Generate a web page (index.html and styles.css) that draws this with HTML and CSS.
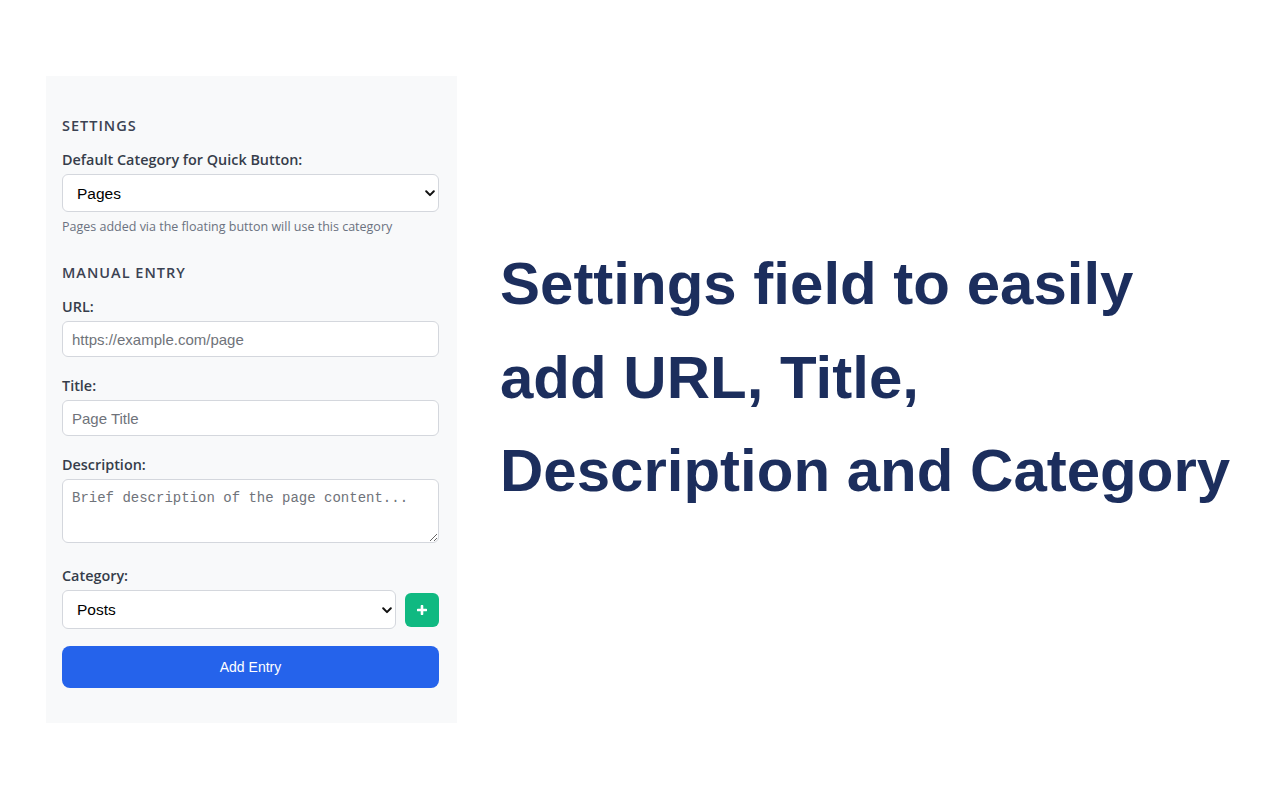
FILE: index.html
```html
<!DOCTYPE html>
<html lang="en">
<head>
<meta charset="utf-8">
<title>Settings</title>
<link rel="stylesheet" href="styles.css">
</head>
<body>
<main class="page">
  <section class="panel">
    <h2 class="section-title">Settings</h2>
    <label class="field-label" for="default-cat">Default Category for Quick Button:</label>
    <div class="select-wrap">
      <select id="default-cat" class="control select">
        <option>Pages</option>
        <option>Posts</option>
      </select>
      <svg class="chevron" width="10" height="7" viewBox="0 0 10 7" aria-hidden="true"><path d="M1.2 1.3 L5 5.1 L8.8 1.3" fill="none" stroke="#111" stroke-width="2" stroke-linecap="round" stroke-linejoin="round"/></svg>
    </div>
    <p class="help">Pages added via the floating button will use this category</p>

    <h2 class="section-title section-gap">Manual Entry</h2>
    <div class="group">
      <label class="field-label" for="url">URL:</label>
      <input id="url" class="control input" type="text" placeholder="https://example.com/page">
    </div>
    <div class="group">
      <label class="field-label" for="title">Title:</label>
      <input id="title" class="control input" type="text" placeholder="Page Title">
    </div>
    <div class="group group-desc">
      <label class="field-label" for="desc">Description:</label>
      <textarea id="desc" class="control textarea" placeholder="Brief description of the page content..."></textarea>
    </div>
    <div class="group group-cat">
      <label class="field-label" for="cat">Category:</label>
      <div class="cat-row">
        <div class="select-wrap grow">
          <select id="cat" class="control select tall">
            <option>Posts</option>
            <option>Pages</option>
          </select>
          <svg class="chevron" width="10" height="7" viewBox="0 0 10 7" aria-hidden="true"><path d="M1.2 1.3 L5 5.1 L8.8 1.3" fill="none" stroke="#111" stroke-width="2" stroke-linecap="round" stroke-linejoin="round"/></svg>
        </div>
        <button class="add-cat" type="button" aria-label="Add category">
          <svg width="10" height="10" viewBox="0 0 10 10" aria-hidden="true"><path d="M5 1 V9 M1 5 H9" stroke="#fff" stroke-width="2.6" stroke-linecap="round"/></svg>
        </button>
      </div>
    </div>
    <button class="primary" type="button">Add Entry</button>
  </section>

  <h1 class="headline">Settings field to easily add URL, Title, Description and Category</h1>
</main>
</body>
</html>
```

FILE: styles.css
```css
* { box-sizing: border-box; }

html, body {
  margin: 0;
  padding: 0;
  background: #ffffff;
}

body {
  width: 1280px;
  height: 800px;
  overflow: hidden;
  font-family: "Open Sans", "Noto Sans", sans-serif;
}

.page {
  display: flex;
  align-items: flex-start;
  padding: 76px 0 0 46px;
}

.panel {
  width: 411px;
  height: 647px;
  background: #f8f9fa;
  padding: 40px 18px 16px 16px;
  display: flex;
  flex-direction: column;
}

.section-title {
  margin: 0 0 14px 0;
  font-size: 14.5px;
  line-height: 20px;
  font-weight: 600;
  letter-spacing: 1px;
  text-transform: uppercase;
  color: #3b4252;
}

.section-gap {
  margin-top: 28px;
}

.field-label {
  display: block;
  font-size: 14.4px;
  line-height: 20px;
  font-weight: 600;
  color: #363d4a;
  margin-bottom: 4px;
}

.group {
  margin-bottom: 19px;
}

.group-desc {
  margin-bottom: 23px;
}

.group-cat {
  margin-bottom: 17px;
}

.control {
  display: block;
  width: 100%;
  margin: 0;
  border: 1px solid #d4d7dd;
  border-radius: 6px;
  background: #ffffff;
  font-family: "Liberation Sans", Arial, sans-serif;
  font-size: 15px;
  color: #111111;
  outline: none;
}

.input {
  height: 36px;
  padding: 0 9px;
}

.input::placeholder {
  color: #6f737a;
}

.textarea {
  height: 64px;
  padding: 8px 9px;
  resize: vertical;
  font-family: "Liberation Mono", "DejaVu Sans Mono", monospace;
  font-size: 14px;
  line-height: 20px;
}

.textarea::placeholder {
  color: #6f737a;
}

.select-wrap {
  position: relative;
}

.grow {
  flex: 1;
}

.select {
  -webkit-appearance: none;
  appearance: none;
  height: 38px;
  padding: 0 30px 0 14px;
  font-size: 15.5px;
  color: #000000;
}

.select.tall {
  height: 39px;
}

.chevron {
  position: absolute;
  right: 4px;
  top: 50%;
  margin-top: -3px;
  pointer-events: none;
}

.help {
  margin: 7px 0 0 0;
  font-size: 12.5px;
  line-height: 16px;
  color: #6b7280;
}

.cat-row {
  display: flex;
  align-items: center;
  gap: 9px;
}

.add-cat {
  width: 34px;
  height: 34px;
  flex: none;
  border: none;
  border-radius: 6px;
  background: #10b981;
  display: flex;
  align-items: center;
  justify-content: center;
  padding: 0;
}

.primary {
  width: 100%;
  height: 42px;
  border: none;
  border-radius: 8px;
  background: #2563eb;
  color: #ffffff;
  font-family: "Liberation Sans", Arial, sans-serif;
  font-size: 14px;
  padding: 0;
}

.headline {
  margin: 161px 0 0 43px;
  width: 745px;
  font-family: "Liberation Sans", Arial, sans-serif;
  font-weight: 700;
  font-size: 60px;
  line-height: 93.5px;
  color: #1c2e5d;
}
```
